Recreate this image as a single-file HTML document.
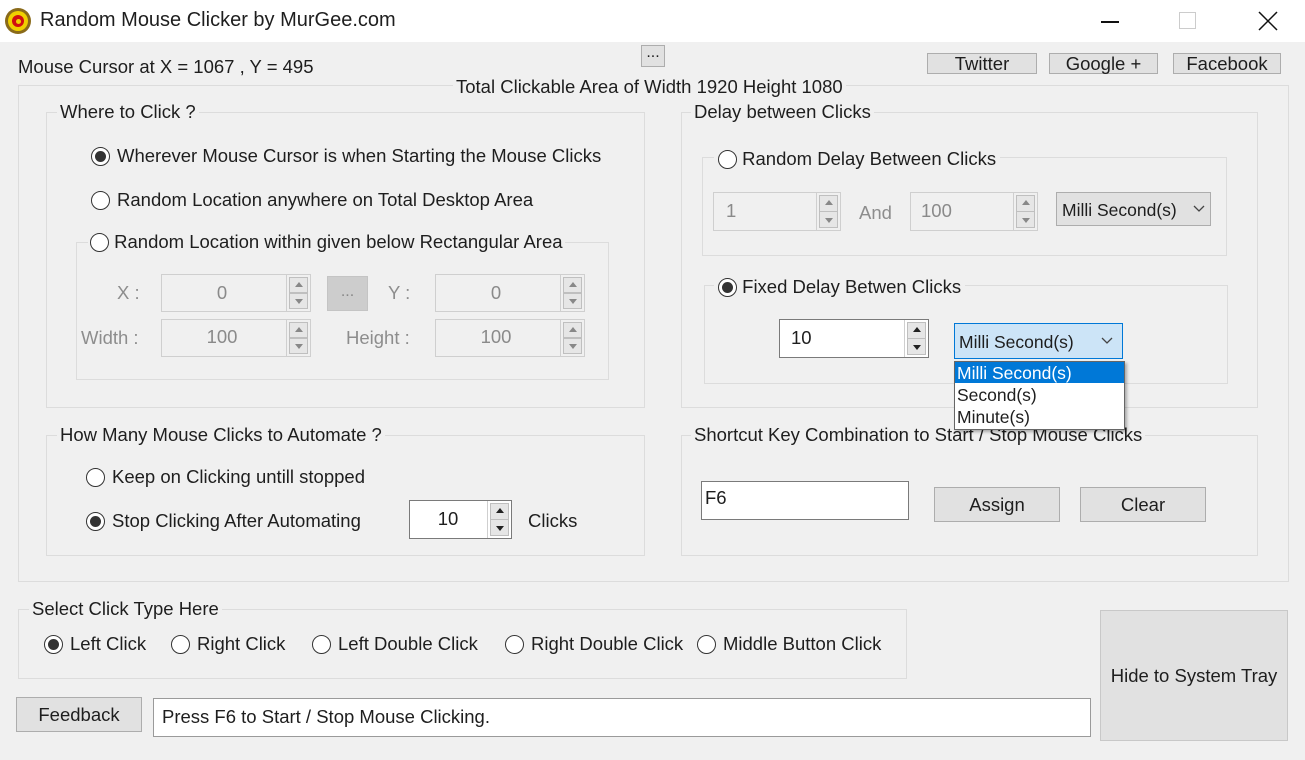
<!DOCTYPE html>
<html><head><meta charset="utf-8"><style>
*{box-sizing:border-box;margin:0;padding:0}
body{width:1305px;height:760px;background:#f0f0f0;font-family:"Liberation Sans",sans-serif;font-size:18.5px;color:#1e1e1e;position:relative;overflow:hidden}
.a{position:absolute;white-space:nowrap;line-height:22px}
.g{position:absolute;border:1px solid #dcdcdc}
.gl{position:absolute;background:#f0f0f0;padding:0 3px;line-height:22px;white-space:nowrap}
.btn{position:absolute;background:#e1e1e1;border:1px solid #adadad;text-align:center;white-space:nowrap}
.r{position:absolute;width:19px;height:19px;border:1px solid #333;border-radius:50%;background:#fff}
.r.c::after{content:"";position:absolute;left:3px;top:3px;width:11px;height:11px;border-radius:50%;background:#333}
.in{position:absolute;background:#fff;border:1px solid #7a7a7a;line-height:normal}
.in.d{background:#f0f0f0;border-color:#cfcfcf;color:#8a8a8a}
.sp{position:absolute;right:0;top:0;bottom:0;width:24px;border-left:1px solid #cfcfcf;background:#f0f0f0}
.sp div{position:absolute;left:2px;right:2px;height:45%;border:1px solid #bfbfbf;background:#e6e6e6}
.sp div::after{content:"";position:absolute;left:50%;top:50%;margin-left:-4px;border-left:4px solid transparent;border-right:4px solid transparent}
.sp .u{top:2px}.sp .u::after{margin-top:-3px;border-bottom:5px solid #222}
.sp .w{bottom:2px}.sp .w::after{margin-top:-2px;border-top:5px solid #222}
.d .sp div::after{border-bottom-color:#888;border-top-color:#888}
.dis{color:#8d8d8d}
</style></head><body>
<div style="position:absolute;left:0;top:0;width:1305px;height:42px;background:#fff"></div>
<div style="position:absolute;left:5px;top:8px;width:26px;height:26px;border-radius:50%;background:#8a6a1a"></div>
<div style="position:absolute;left:8px;top:11px;width:20px;height:20px;border-radius:50%;background:#f0d000"></div>
<div style="position:absolute;left:12px;top:15px;width:12px;height:12px;border-radius:50%;background:#d01010"></div>
<div style="position:absolute;left:15.5px;top:18.5px;width:5px;height:5px;border-radius:50%;background:#f0d000"></div>
<div class="a" style="left:40px;top:9px;font-size:20px">Random Mouse Clicker by MurGee.com</div>
<div style="position:absolute;left:1101px;top:21px;width:18px;height:1.5px;background:#111"></div>
<div style="position:absolute;left:1179px;top:12px;width:17px;height:17px;border:1px solid #ccc"></div>
<svg style="position:absolute;left:1258px;top:11px" width="20" height="20"><path d="M1 1L19 19M19 1L1 19" stroke="#111" stroke-width="1.5"/></svg>

<div class="a" style="left:18px;top:56px">Mouse Cursor at X = 1067 , Y = 495</div>
<div class="btn" style="left:641px;top:45px;width:24px;height:22px;line-height:14px;font-size:16px">...</div>
<div class="btn" style="left:927px;top:53px;width:110px;height:21px;line-height:19px">Twitter</div>
<div class="btn" style="left:1049px;top:53px;width:109px;height:21px;line-height:19px">Google +</div>
<div class="btn" style="left:1173px;top:53px;width:108px;height:21px;line-height:19px">Facebook</div>

<div class="g" style="left:18px;top:85px;width:1271px;height:497px"></div>
<div class="gl" style="left:453px;top:76px">Total Clickable Area of Width 1920 Height 1080</div>

<div class="g" style="left:46px;top:112px;width:599px;height:296px"></div>
<div class="gl" style="left:57px;top:101px">Where to Click ?</div>
<div class="r c" style="left:91px;top:147px"></div><div class="a" style="left:117px;top:145px">Wherever Mouse Cursor is when Starting the Mouse Clicks</div>
<div class="r" style="left:91px;top:191px"></div><div class="a" style="left:117px;top:189px">Random Location anywhere on Total Desktop Area</div>
<div class="g" style="left:76px;top:242px;width:533px;height:138px"></div>
<div class="gl" style="left:88px;top:231px;padding:0 2px"><span class="r" style="position:relative;display:inline-block;vertical-align:-4px;left:0;top:0"></span> Random Location within given below Rectangular Area</div>
<div class="a dis" style="left:117px;top:282px">X :</div>
<div class="in d" style="left:161px;top:274px;width:150px;height:38px"><div class="a" style="left:0;width:120px;text-align:center;top:7px">0</div><div class="sp"><div class="u"></div><div class="w"></div></div></div>
<div style="position:absolute;left:327px;top:276px;width:41px;height:35px;background:#cdcdcd;border:1px solid #c4c4c4;color:#888;text-align:center;line-height:30px;font-size:16px">...</div>
<div class="a dis" style="left:388px;top:282px">Y :</div>
<div class="in d" style="left:435px;top:274px;width:150px;height:38px"><div class="a" style="left:0;width:120px;text-align:center;top:7px">0</div><div class="sp"><div class="u"></div><div class="w"></div></div></div>
<div class="a dis" style="left:81px;top:327px">Width :</div>
<div class="in d" style="left:161px;top:319px;width:150px;height:38px"><div class="a" style="left:0;width:120px;text-align:center;top:6px">100</div><div class="sp"><div class="u"></div><div class="w"></div></div></div>
<div class="a dis" style="left:346px;top:327px">Height :</div>
<div class="in d" style="left:435px;top:319px;width:150px;height:38px"><div class="a" style="left:0;width:120px;text-align:center;top:6px">100</div><div class="sp"><div class="u"></div><div class="w"></div></div></div>

<div class="g" style="left:681px;top:112px;width:577px;height:296px"></div>
<div class="gl" style="left:691px;top:101px">Delay between Clicks</div>
<div class="g" style="left:702px;top:157px;width:525px;height:99px"></div>
<div class="gl" style="left:714px;top:148px;padding:0 4px"><span class="r" style="position:relative;display:inline-block;vertical-align:-4px;left:0;top:0"></span> Random Delay Between Clicks</div>
<div class="in d" style="left:713px;top:192px;width:128px;height:39px"><div class="a" style="left:12px;top:7px">1</div><div class="sp"><div class="u"></div><div class="w"></div></div></div>
<div class="a dis" style="left:859px;top:202px">And</div>
<div class="in d" style="left:910px;top:192px;width:128px;height:39px"><div class="a" style="left:10px;top:7px">100</div><div class="sp"><div class="u"></div><div class="w"></div></div></div>
<div style="position:absolute;left:1056px;top:192px;width:155px;height:34px;background:#e1e1e1;border:1px solid #adadad"><div class="a" style="left:5px;top:6px;font-size:17.5px">Milli Second(s)</div><svg style="position:absolute;left:136px;top:12px" width="12" height="8"><path d="M1 1L6 6L11 1" stroke="#444" fill="none" stroke-width="1.3"/></svg></div>

<div class="g" style="left:704px;top:285px;width:524px;height:99px"></div>
<div class="gl" style="left:714px;top:276px;padding:0 4px"><span class="r c" style="position:relative;display:inline-block;vertical-align:-4px;left:0;top:0"></span> Fixed Delay Betwen Clicks</div>
<div class="in" style="left:779px;top:319px;width:150px;height:39px"><div class="a" style="left:11px;top:7px">10</div><div class="sp" style="background:#fff"><div class="u"></div><div class="w"></div></div></div>
<div style="position:absolute;left:954px;top:323px;width:169px;height:36px;background:#cce4f7;border:1px solid #0078d7"><div class="a" style="left:4px;top:7px;font-size:17.5px">Milli Second(s)</div><svg style="position:absolute;left:146px;top:13px" width="12" height="8"><path d="M1 1L6 6L11 1" stroke="#444" fill="none" stroke-width="1.3"/></svg></div>

<div class="g" style="left:46px;top:435px;width:599px;height:121px"></div>
<div class="gl" style="left:57px;top:424px">How Many Mouse Clicks to Automate ?</div>
<div class="r" style="left:86px;top:468px"></div><div class="a" style="left:112px;top:466px">Keep on Clicking untill stopped</div>
<div class="r c" style="left:86px;top:512px"></div><div class="a" style="left:112px;top:510px">Stop Clicking After Automating</div>
<div class="in" style="left:409px;top:500px;width:103px;height:39px"><div class="a" style="left:0;width:76px;text-align:center;top:7px">10</div><div class="sp" style="background:#fff"><div class="u"></div><div class="w"></div></div></div>
<div class="a" style="left:528px;top:510px">Clicks</div>

<div class="g" style="left:681px;top:435px;width:577px;height:121px"></div>
<div class="gl" style="left:691px;top:424px">Shortcut Key Combination to Start / Stop Mouse Clicks</div>
<div class="in" style="left:701px;top:481px;width:208px;height:39px"><div class="a" style="left:3px;top:5px">F6</div></div>
<div class="btn" style="left:934px;top:487px;width:126px;height:35px;line-height:33px">Assign</div>
<div class="btn" style="left:1080px;top:487px;width:126px;height:35px;line-height:33px">Clear</div>

<div style="position:absolute;left:954px;top:361px;width:171px;height:69px;background:#fff;border:1px solid #666;box-shadow:2px 2px 3px rgba(0,0,0,.3)"></div>
<div style="position:absolute;left:955px;top:362px;width:169px;height:21px;background:#0078d7"></div>
<div class="a" style="left:957px;top:362px;color:#fff;line-height:22px;font-size:17.5px">Milli Second(s)</div>
<div class="a" style="left:957px;top:384px;font-size:17.5px">Second(s)</div>
<div class="a" style="left:957px;top:406px;font-size:17.5px">Minute(s)</div>

<div class="g" style="left:18px;top:609px;width:889px;height:70px"></div>
<div class="gl" style="left:29px;top:598px">Select Click Type Here</div>
<div class="r c" style="left:44px;top:635px"></div><div class="a" style="left:70px;top:633px">Left Click</div>
<div class="r" style="left:171px;top:635px"></div><div class="a" style="left:197px;top:633px">Right Click</div>
<div class="r" style="left:312px;top:635px"></div><div class="a" style="left:338px;top:633px">Left Double Click</div>
<div class="r" style="left:505px;top:635px"></div><div class="a" style="left:531px;top:633px">Right Double Click</div>
<div class="r" style="left:697px;top:635px"></div><div class="a" style="left:723px;top:633px">Middle Button Click</div>

<div class="btn" style="left:16px;top:697px;width:126px;height:35px;line-height:33px">Feedback</div>
<div class="in" style="left:153px;top:698px;width:938px;height:39px;border-color:#9a9a9a"><div class="a" style="left:8px;top:7px">Press F6 to Start / Stop Mouse Clicking.</div></div>
<div class="btn" style="left:1100px;top:610px;width:188px;height:131px;line-height:129px;background:#e1e1e1;border-color:#c8c8c8">Hide to System Tray</div>
</body></html>
